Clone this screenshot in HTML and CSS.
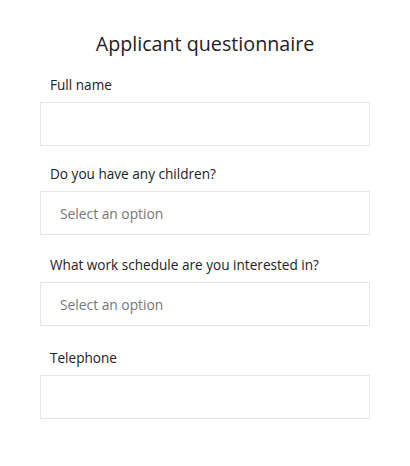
FILE: index.html
```html
<!DOCTYPE html>
<html>
<head>
<meta charset="utf-8">
<link rel="stylesheet" href="styles.css">
</head>
<body>
<form class="form">
  <h1 class="title">Applicant questionnaire</h1>
  <div class="field">
    <label class="label">Full name</label>
    <div class="box"></div>
  </div>
  <div class="field">
    <label class="label">Do you have any children?</label>
    <div class="box"><span class="placeholder">Select an option</span></div>
  </div>
  <div class="field">
    <label class="label">What work schedule are you interested in?</label>
    <div class="box"><span class="placeholder">Select an option</span></div>
  </div>
  <div class="field">
    <label class="label">Telephone</label>
    <div class="box"></div>
  </div>
</form>
</body>
</html>
```
FILE: styles.css
```css
html, body {
  margin: 0;
  padding: 0;
  background: #ffffff;
}
body {
  font-family: "Open Sans", "DejaVu Sans", sans-serif;
  color: #222;
}
.form {
  width: 330px;
  margin: 0 auto;
  padding-top: 30px;
  display: flex;
  flex-direction: column;
}
.title {
  margin: 0 0 19px 0;
  text-align: center;
  font-size: 19.7px;
  font-weight: 400;
  line-height: 27px;
  color: #222;
}
.field {
  display: flex;
  flex-direction: column;
  margin-bottom: 19px;
}
.field:nth-child(3) {
  margin-bottom: 21px;
}
.field:nth-child(4) {
  margin-bottom: 23px;
}
.label {
  font-size: 13.6px;
  line-height: 18px;
  padding-left: 10px;
  margin-bottom: 8px;
  color: #222;
}
.box {
  height: 42px;
  border: 1px solid #e6e6e6;
  display: flex;
  align-items: center;
  padding-left: 19px;
}
.placeholder {
  font-size: 13.8px;
  color: #777;
}
```
